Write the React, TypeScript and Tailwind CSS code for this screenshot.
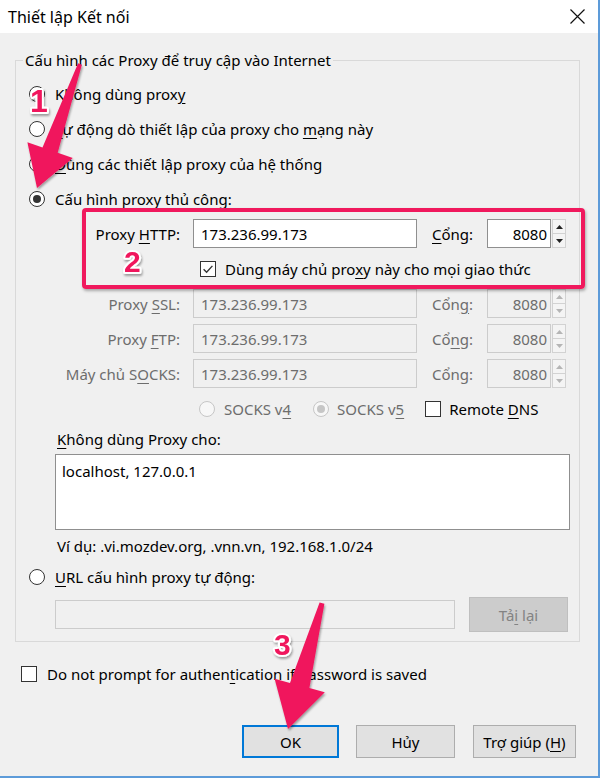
import React from 'react';

// accelerator key underline
const U = ({ children }: { children: React.ReactNode }) => (
  <span className="underline underline-offset-[3px] decoration-1">{children}</span>
);

const Radio = ({ checked = false, disabled = false }: { checked?: boolean; disabled?: boolean }) => (
  <span
    className={
      disabled
        ? 'flex h-4 w-4 shrink-0 items-center justify-center rounded-full border border-[#c6c6c6] bg-[#f7f7f7]'
        : 'flex h-4 w-4 shrink-0 items-center justify-center rounded-full border border-[#333333] bg-white'
    }
  >
    {checked && (
      <span className={disabled ? 'h-2 w-2 rounded-full bg-[#c6c6c6]' : 'h-2 w-2 rounded-full bg-[#333333]'} />
    )}
  </span>
);

const Checkbox = ({ checked = false }: { checked?: boolean }) => (
  <span className="flex h-4 w-4 shrink-0 items-center justify-center border border-[#333333] bg-white">
    {checked && (
      <svg width="12" height="12" viewBox="0 0 12 12">
        <path d="M1.6 6.3 L4.6 9.2 L10.4 2.9" fill="none" stroke="#333333" strokeWidth="1.4" />
      </svg>
    )}
  </span>
);

const Spinner = ({ disabled = false }: { disabled?: boolean }) => {
  const c = disabled ? '#b5b5b5' : '#222222';
  return (
    <div className="ml-px flex h-[29px] w-[14px] flex-col border border-[#d2d2d2] bg-[#f4f4f4]">
      <div className="flex flex-1 items-center justify-center border-b border-[#d2d2d2]">
        <svg width="7" height="4" viewBox="0 0 7 4">
          <path d="M0 4 L3.5 0 L7 4 Z" fill={c} />
        </svg>
      </div>
      <div className="flex flex-1 items-center justify-center">
        <svg width="7" height="4" viewBox="0 0 7 4">
          <path d="M0 0 L3.5 4 L7 0 Z" fill={c} />
        </svg>
      </div>
    </div>
  );
};

const ProxyRow = ({
  label,
  portLabel,
  disabled = false,
}: {
  label: React.ReactNode;
  portLabel: React.ReactNode;
  disabled?: boolean;
}) => (
  <div className={disabled ? 'flex h-[35px] items-center text-[#6d6d6d]' : 'flex h-[35px] items-center text-black'}>
    <div className="w-[164px] text-right">{label}</div>
    <div
      className={
        disabled
          ? 'ml-[13px] flex h-[29px] w-[224px] items-center border border-[#cccccc] bg-[#f0f0f0] px-[7px]'
          : 'ml-[13px] flex h-[29px] w-[224px] items-center border border-[#8f8f8f] bg-white px-[7px]'
      }
    >
      173.236.99.173
    </div>
    <div className="ml-[15px] w-[55px]">{portLabel}</div>
    <div
      className={
        disabled
          ? 'flex h-[29px] w-[64px] items-center justify-end border border-[#cccccc] bg-[#f0f0f0] pr-[3px]'
          : 'flex h-[29px] w-[64px] items-center justify-end border border-[#8f8f8f] bg-white pr-[3px]'
      }
    >
      8080
    </div>
    <Spinner disabled={disabled} />
  </div>
);

const Annotations = () => (
  <>
    <div className="pointer-events-none absolute left-[82px] top-[208px] h-[81px] w-[503px] rounded-[4px] border-4 border-[#f0195d] shadow-[1px_2px_3px_rgba(0,0,0,0.3)]" />
    <svg className="pointer-events-none absolute left-0 top-0" width="600" height="778" viewBox="0 0 600 778">
      <defs>
        <filter id="sh" x="-20%" y="-20%" width="140%" height="140%">
          <feDropShadow dx="1" dy="2" stdDeviation="1.2" floodColor="#000" floodOpacity="0.35" />
        </filter>
      </defs>
      <g filter="url(#sh)" fill="#f0195d">
        <path d="M78.1 63.3 L81.9 64.7 L57.7 152.8 L72.8 158.1 L37 188 L27.4 142.3 L42.5 147.6 Z" />
        <path d="M319.6 602.4 L324.4 603.7 L309.4 688.1 L324.8 692.3 L288 729 L274.6 678.7 L290 682.9 Z" />
      </g>
      <g
        filter="url(#sh)"
        fill="#f0195d"
        stroke="#ffffff"
        strokeWidth="4"
        strokeLinejoin="round"
        paintOrder="stroke"
        fontWeight="bold"
        fontFamily="'Liberation Sans', Arial, sans-serif"
      >
        <text x="30" y="112" fontSize="32">1</text>
        <text x="124" y="272" fontSize="30">2</text>
        <text x="274" y="655" fontSize="30">3</text>
      </g>
    </svg>
  </>
);

const App = () => {
  return (
    <div className="relative h-[778px] w-[600px] overflow-hidden border-b-2 border-r-2 border-[#5d9bd9] bg-[#f0f0f0] font-['Noto_Sans',sans-serif] text-[15px] leading-5 text-black">
      {/* title bar */}
      <div className="flex h-[33px] items-center justify-between bg-white pl-2 pr-[13px]">
        <span className="text-[16px]">Thiết lập Kết nối</span>
        <svg width="15" height="15" viewBox="0 0 15 15">
          <path d="M0.5 0.5 L14.5 14.5 M14.5 0.5 L0.5 14.5" stroke="#111111" strokeWidth="1.2" />
        </svg>
      </div>

      <fieldset className="ml-[15px] mt-[17px] w-[565px] border border-[#d9d9d9] px-0 pb-[9px] pt-[6px]">
        <legend className="ml-[7px] px-[2px]">Cấu hình các Proxy để truy cập vào Internet</legend>

        <div className="flex flex-col">
          <div className="flex h-[35px] items-center gap-[10px] pl-[13px]">
            <Radio />
            <span>
              Không dùng prox<U>y</U>
            </span>
          </div>
          <div className="flex h-[35px] items-center gap-[10px] pl-[13px]">
            <Radio />
            <span>
              <U>T</U>ự động dò thiết lập của proxy cho <U>m</U>ạng này
            </span>
          </div>
          <div className="flex h-[35px] items-center gap-[10px] pl-[13px]">
            <Radio />
            <span>
              <U>D</U>ùng các thiết lập proxy của hệ thống
            </span>
          </div>
          <div className="flex h-[35px] items-center gap-[10px] pl-[13px]">
            <Radio checked />
            <span>
              Cấu hình p<U>r</U>oxy thủ công:
            </span>
          </div>

          <ProxyRow
            label={
              <>
                Proxy <U>H</U>TTP:
              </>
            }
            portLabel={
              <>
                <U>C</U>ổng:
              </>
            }
          />
          <div className="flex h-[35px] items-center gap-[9px] pl-[184px]">
            <Checkbox checked />
            <span>
              Dùng máy chủ pro<U>x</U>y này cho mọi giao thức
            </span>
          </div>
          <ProxyRow
            disabled
            label={
              <>
                Proxy <U>S</U>SL:
              </>
            }
            portLabel={
              <>
                Cổn<U>g</U>:
              </>
            }
          />
          <ProxyRow
            disabled
            label={
              <>
                Proxy <U>F</U>TP:
              </>
            }
            portLabel={
              <>
                Cổ<U>n</U>g:
              </>
            }
          />
          <ProxyRow
            disabled
            label={
              <>
                Máy chủ S<U>O</U>CKS:
              </>
            }
            portLabel="Cổng:"
          />

          <div className="flex h-[35px] items-center pl-[183px]">
            <Radio disabled />
            <span className="ml-[9px] text-[#6d6d6d]">
              SOCKS v<U>4</U>
            </span>
            <span className="ml-[22px]">
              <Radio checked disabled />
            </span>
            <span className="ml-[8px] text-[#6d6d6d]">
              SOCKS v<U>5</U>
            </span>
            <span className="ml-[21px]">
              <Checkbox />
            </span>
            <span className="ml-[8px]">
              Remote <U>D</U>NS
            </span>
          </div>

          <div className="flex h-[26px] items-center pl-[41px]">
            <span>
              <U>K</U>hông dùng Proxy cho:
            </span>
          </div>
          <div className="ml-[39px] mt-[2px] h-[76px] w-[515px] border border-[#8f8f8f] bg-white px-[6px] pt-[6px]">
            localhost, 127.0.0.1
          </div>
          <div className="flex h-[32px] items-center pl-[41px]">
            <span>Ví dụ: .vi.mozdev.org, .vnn.vn, 192.168.1.0/24</span>
          </div>
          <div className="flex h-[30px] items-center gap-[10px] pl-[13px]">
            <Radio />
            <span>
              <U>U</U>RL cấu hình proxy tự động:
            </span>
          </div>
          <div className="mt-[5px] flex h-[35px] items-center pl-[39px]">
            <div className="h-[29px] w-[400px] border border-[#cccccc] bg-[#f0f0f0]" />
            <div className="ml-[14px] flex h-[35px] w-[99px] items-center justify-center border border-[#bfbfbf] bg-[#cccccc] text-[#838383]">
              <span>
                Tả<U>i</U> lại
              </span>
            </div>
          </div>
        </div>
      </fieldset>

      <div className="mt-[20px] flex h-[24px] items-center gap-[10px] pl-[21px]">
        <Checkbox />
        <span>
          Do not prompt for authen<U>t</U>ication if password is saved
        </span>
      </div>

      <div className="mt-[39px] flex items-center pl-[242px]">
        <div className="flex h-[33px] w-[97px] items-center justify-center border-2 border-[#0078d7] bg-[#e1e1e1]">
          OK
        </div>
        <div className="ml-[17px] flex h-[33px] w-[99px] items-center justify-center border border-[#adadad] bg-[#e1e1e1]">
          Hủy
        </div>
        <div className="ml-[18px] flex h-[33px] w-[103px] items-center justify-center border border-[#adadad] bg-[#e1e1e1]">
          <span>
            Trợ giúp (<U>H</U>)
          </span>
        </div>
      </div>

      <Annotations />
    </div>
  );
};

export default App;
